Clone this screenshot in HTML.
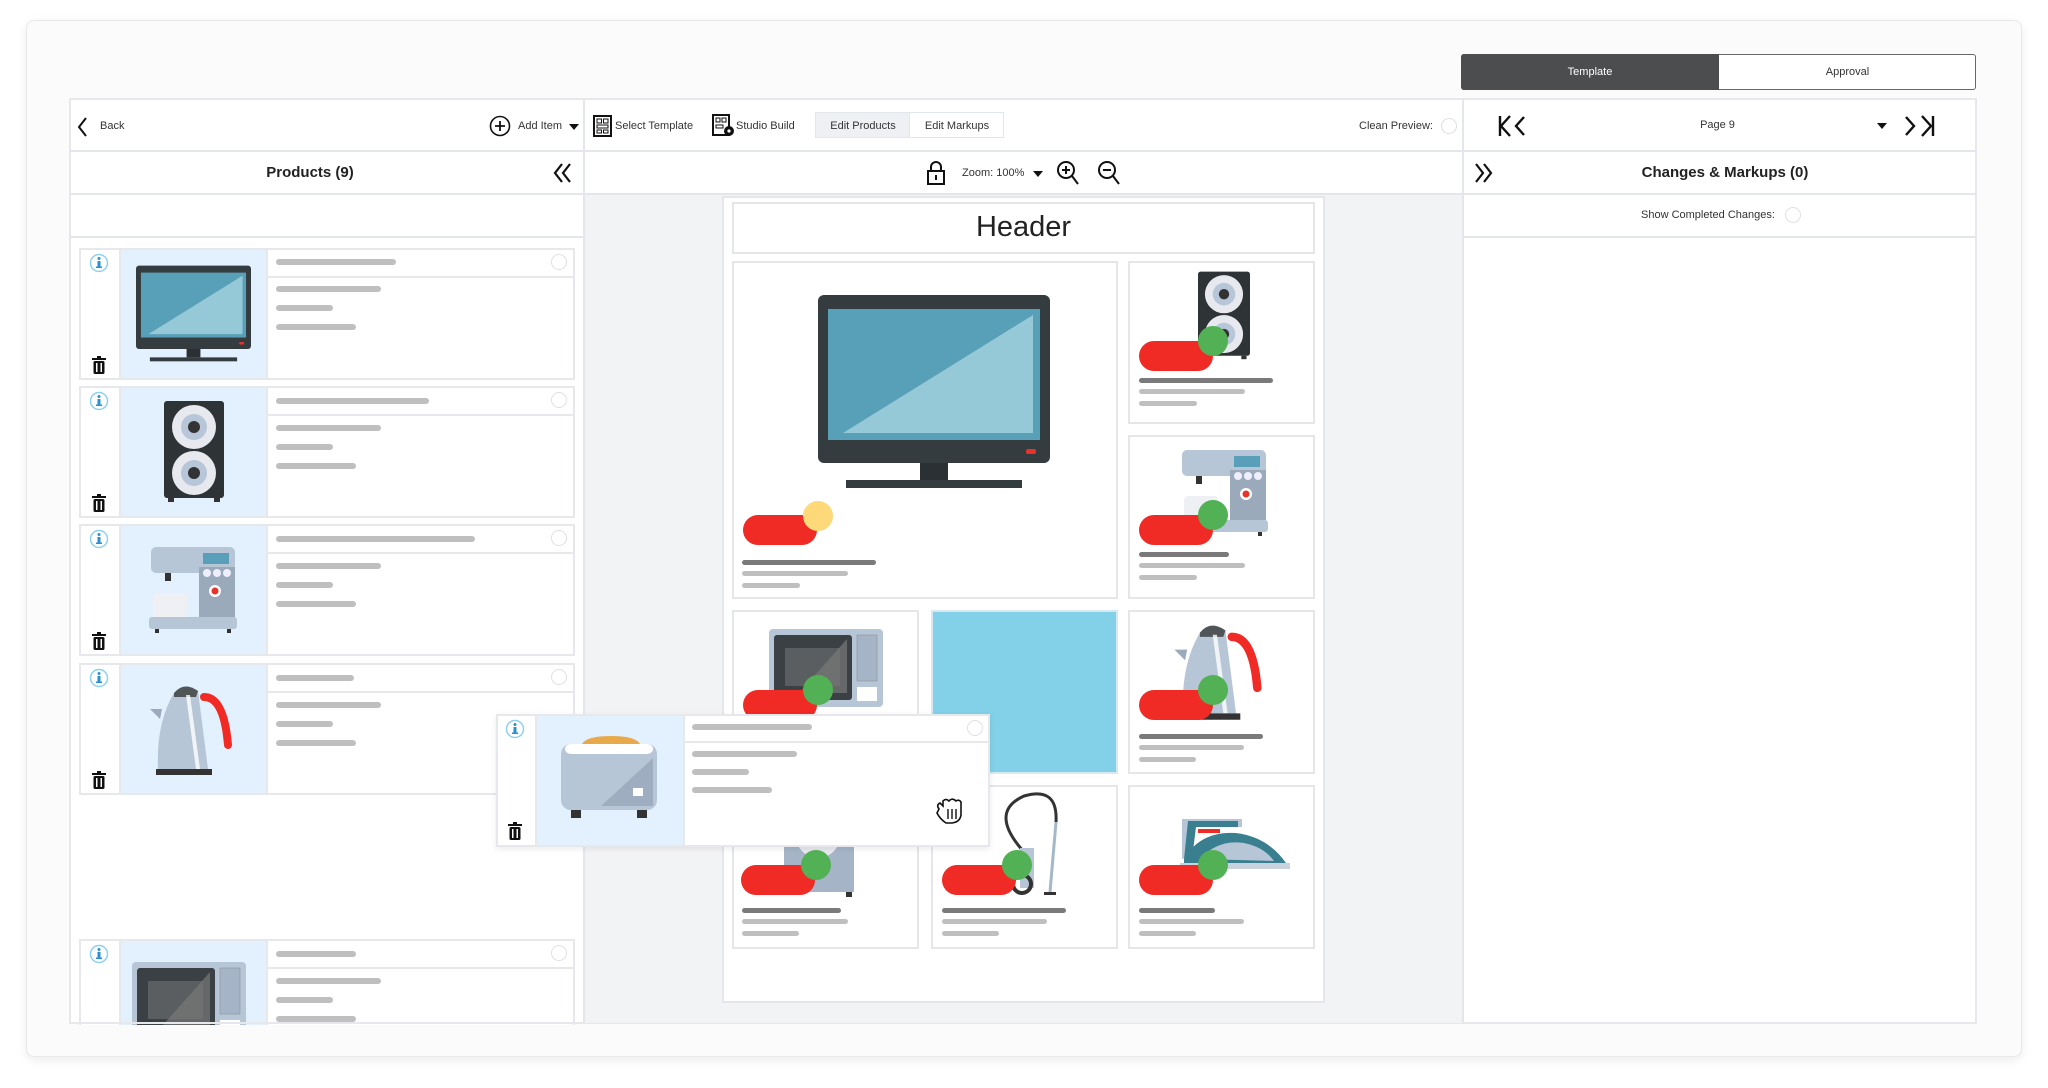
<!DOCTYPE html>
<html><head><meta charset="utf-8">
<style>
*{box-sizing:border-box;margin:0;padding:0}
body{width:2048px;height:1088px;background:#fff;position:relative;overflow:hidden;font-family:"Liberation Sans",sans-serif;color:#222}
.a{position:absolute}
.outer{left:26px;top:20px;width:1996px;height:1037px;background:#fbfbfc;border:1px solid #e8e8ea;border-radius:8px;box-shadow:0 3px 10px rgba(0,0,0,.08)}
.line{background:#e3e6ea}
.t{position:absolute;white-space:nowrap;font-size:12px;color:#333}
.card{position:absolute;left:79px;width:496px;height:132px;background:#fff;border:2px solid #e6e8ec}
.card .img{position:absolute;left:38px;top:0;width:149px;height:128px;background:#e3f0fd;border-left:2px solid #e6e8ec;border-right:2px solid #e6e8ec}
.card .hr{position:absolute;left:187px;right:0;top:26px;height:2px;background:#e6e8ec}
.bar{position:absolute;height:6px;border-radius:3px;background:#bfbfbf}
.bd{background:#7a7a7a}
.radio{position:absolute;width:16px;height:16px;border-radius:50%;border:1.5px solid #dde0e4;background:#fff}
.tile{position:absolute;background:#fff;border:2px solid #e4e6ea}
.pill{position:absolute;width:74px;height:30px;border-radius:15px;background:#f02a25}
.dot{position:absolute;width:30px;height:30px;border-radius:50%;background:#52b155}
svg{position:absolute;overflow:visible}
</style></head><body>
<svg width="0" height="0" style="position:absolute">
<defs>
<symbol id="tv" viewBox="0 0 232 193">
<rect x="0" y="0" width="232" height="168" rx="6" fill="#353c40"/>
<rect x="10" y="14" width="212" height="131" fill="#589fb8"/>
<polygon points="215,20 215,138 25,138" fill="#95c9d7"/>
<rect x="208" y="154" width="10" height="5" rx="2" fill="#e8332a"/>
<rect x="102" y="168" width="28" height="17" fill="#2a3033"/>
<rect x="28" y="185" width="176" height="8" fill="#353c40"/>
</symbol>
<symbol id="spk" viewBox="0 0 60 100">
<rect x="0" y="0" width="60" height="97" rx="3" fill="#2e3336"/>
<circle cx="30" cy="26" r="22" fill="#e7e9ee"/><circle cx="30" cy="26" r="13" fill="#b7c6d8"/><circle cx="30" cy="26" r="6" fill="#333"/>
<circle cx="30" cy="72" r="22" fill="#e7e9ee"/><circle cx="30" cy="72" r="13" fill="#b7c6d8"/><circle cx="30" cy="72" r="6" fill="#333"/>
<rect x="4" y="97" width="6" height="4" fill="#333"/><rect x="50" y="97" width="6" height="4" fill="#333"/>
</symbol>
<symbol id="cof" viewBox="0 0 90 88">
<rect x="2" y="0" width="84" height="26" rx="5" fill="#b7c6d7"/>
<rect x="54" y="6" width="26" height="11" fill="#5a9fb9"/>
<rect x="50" y="20" width="36" height="50" fill="#9aaabb"/>
<circle cx="58" cy="26" r="4" fill="#eef"/><circle cx="68" cy="26" r="4" fill="#eef"/><circle cx="78" cy="26" r="4" fill="#eef"/>
<circle cx="66" cy="44" r="6" fill="#fff"/><circle cx="66" cy="44" r="3.5" fill="#e8332a"/>
<rect x="16" y="26" width="6" height="8" fill="#333"/>
<rect x="4" y="46" width="34" height="26" rx="4" fill="#eef0f4"/>
<rect x="0" y="70" width="88" height="12" rx="3" fill="#b7c6d7"/>
<rect x="6" y="82" width="4" height="4" fill="#333"/><rect x="78" y="82" width="4" height="4" fill="#333"/>
</symbol>
<symbol id="ket" viewBox="0 0 90 96">
<path d="M28 10 Q38 -2 52 8 L62 86 L12 86 Q10 40 28 10Z" fill="#b7c6d7"/>
<path d="M28 10 Q38 -2 52 8 L50 14 L28 14Z" fill="#505558"/>
<path d="M44 12 L54 86 L50 86 L40 12Z" fill="#fff" opacity=".8"/>
<path d="M58 14 Q78 14 82 62" stroke="#f02a25" stroke-width="8" fill="none" stroke-linecap="round"/>
<path d="M4 26 L16 26 L14 36Z" fill="#9aaabb"/>
<rect x="10" y="86" width="56" height="6" fill="#333"/>
</symbol>
<symbol id="mw" viewBox="0 0 114 80">
<rect x="0" y="0" width="114" height="78" rx="4" fill="#b7c6d7"/>
<rect x="5" y="6" width="78" height="65" rx="3" fill="#3a4043"/>
<rect x="16" y="19" width="55" height="38" fill="#5a5e60"/>
<polygon points="78,10 78,64 30,64" fill="#777" opacity=".7"/>
<rect x="88" y="6" width="20" height="46" fill="#a5b5c7" stroke="#888" stroke-width=".5"/>
<rect x="88" y="58" width="20" height="14" fill="#fff"/>
</symbol>
<symbol id="toa" viewBox="0 0 96 92">
<path d="M20 18 Q20 6 50 6 Q80 6 80 18Z" fill="#e8a94a"/>
<rect x="0" y="14" width="96" height="66" rx="10" fill="#b7c6d7"/>
<rect x="4" y="14" width="88" height="10" rx="6" fill="#fff"/>
<polygon points="92,28 92,76 40,76" fill="#9eaec0"/>
<rect x="72" y="58" width="10" height="8" fill="#fff"/>
<rect x="10" y="80" width="10" height="8" fill="#333"/><rect x="76" y="80" width="10" height="8" fill="#333"/>
</symbol>
<symbol id="vac" viewBox="0 0 80 110">
<path d="M30 60 Q-6 20 30 4 Q64 -6 62 30" stroke="#333" stroke-width="3" fill="none"/>
<line x1="62" y1="30" x2="56" y2="100" stroke="#a4b8c8" stroke-width="3"/>
<rect x="26" y="56" width="14" height="40" fill="#b7c6d7"/>
<circle cx="28" cy="92" r="9" fill="none" stroke="#333" stroke-width="4"/>
<rect x="50" y="100" width="12" height="3" fill="#333"/>
</symbol>
<symbol id="wash" viewBox="0 0 80 80">
<rect x="0" y="0" width="70" height="72" fill="#a5b5c7"/>
<circle cx="34" cy="16" r="22" fill="#e7e9ee"/><circle cx="34" cy="12" r="14" fill="#333"/>
<rect x="62" y="72" width="6" height="5" fill="#333"/>
</symbol>
<symbol id="iron" viewBox="0 0 120 80">
<path d="M12 6 L72 6 L72 14 L24 14 L20 44 L12 46Z" fill="#b7c6d7"/>
<path d="M18 8 L68 8 L68 14 L26 14 L22 46 L14 46Z" fill="#3a7f90"/>
<path d="M14 46 Q30 18 66 20 Q98 24 116 50 L14 52Z" fill="#3a7f90"/>
<path d="M30 46 Q48 26 74 30 Q94 34 104 48Z" fill="#b7c6d7"/>
<rect x="28" y="16" width="22" height="4" fill="#f02a25"/>
<rect x="10" y="50" width="110" height="6" fill="#c9d3de"/>
</symbol>
<symbol id="info" viewBox="0 0 20 20"><circle cx="10" cy="10" r="8.5" fill="none" stroke="#8fd0ef" stroke-width="1.5"/><circle cx="10" cy="5.5" r="1.5" fill="#2a8fd0"/><rect x="8.5" y="8" width="3" height="6.5" fill="#2a8fd0"/><rect x="7" y="13.5" width="6" height="1.5" fill="#2a8fd0"/></symbol>
<symbol id="trash" viewBox="0 0 14 18"><rect x="0" y="2" width="14" height="2" fill="#111"/><rect x="5" y="0" width="4" height="2" fill="#111"/><rect x="1.5" y="5" width="11" height="13" rx="1.5" fill="#111"/><rect x="4" y="7" width="1.5" height="9" fill="#fff"/><rect x="8.5" y="7" width="1.5" height="9" fill="#fff"/></symbol>
</defs></svg>

<div class="a outer"></div>

<!-- tabs -->
<div class="a" style="left:1461px;top:54px;width:515px;height:36px;border:1px solid #666;border-radius:3px;background:#fff"></div>
<div class="a" style="left:1461px;top:54px;width:258px;height:36px;background:#4b4d4f;border-radius:3px 0 0 3px"></div>
<div class="t" style="left:1461px;top:66px;width:258px;text-align:center;color:#fff;font-size:11px">Template</div>
<div class="t" style="left:1719px;top:66px;width:257px;text-align:center;font-size:11px">Approval</div>

<!-- main panel -->
<div class="a" style="left:69px;top:98px;width:1908px;height:926px;background:#fff;border:2px solid #e6e8ec"></div>
<div class="a" style="left:584px;top:194px;width:879px;height:829px;background:#f2f3f5"></div>
<div class="a line" style="left:70px;top:150px;width:1906px;height:2px"></div>
<div class="a line" style="left:70px;top:193px;width:1906px;height:2px"></div>
<div class="a line" style="left:70px;top:236px;width:514px;height:2px"></div>
<div class="a line" style="left:1463px;top:236px;width:513px;height:2px"></div>
<div class="a line" style="left:583px;top:99px;width:2px;height:924px"></div>
<div class="a line" style="left:1462px;top:99px;width:2px;height:924px"></div>

<!-- toolbar row -->
<svg style="left:76px;top:116px" width="12" height="22"><path d="M10 2 L3 11 L10 20" stroke="#111" stroke-width="2" fill="none"/></svg>
<div class="t" style="left:100px;top:120px;font-size:11px">Back</div>
<svg style="left:489px;top:115px" width="22" height="22"><circle cx="11" cy="11" r="9.5" fill="none" stroke="#111" stroke-width="1.6"/><path d="M11 6V16M6 11H16" stroke="#111" stroke-width="1.8"/></svg>
<div class="t" style="left:518px;top:120px;font-size:11px">Add Item</div>
<svg style="left:569px;top:123px" width="10" height="8"><path d="M0 1H10L5 7Z" fill="#111"/></svg>
<svg style="left:593px;top:115px" width="20" height="22"><rect x="1" y="1" width="17" height="20" fill="none" stroke="#111" stroke-width="2"/><rect x="4" y="4" width="4.5" height="4" fill="none" stroke="#111"/><rect x="10.5" y="4" width="4.5" height="4" fill="none" stroke="#111"/><rect x="4" y="10" width="11" height="3" fill="none" stroke="#111"/><rect x="4" y="15" width="4.5" height="3" fill="none" stroke="#111"/><rect x="10.5" y="15" width="4.5" height="3" fill="none" stroke="#111"/></svg>
<div class="t" style="left:615px;top:120px;font-size:11px">Select Template</div>
<svg style="left:712px;top:114px" width="24" height="24"><rect x="1" y="1" width="16" height="20" fill="none" stroke="#111" stroke-width="2"/><rect x="4" y="4" width="4" height="4" fill="none" stroke="#111"/><rect x="10" y="4" width="4" height="4" fill="none" stroke="#111"/><rect x="4" y="11" width="7" height="3" fill="none" stroke="#111"/><circle cx="17" cy="17" r="5" fill="#111"/><circle cx="17" cy="17" r="1.6" fill="#fff"/></svg>
<div class="t" style="left:736px;top:120px;font-size:11px">Studio Build</div>
<div class="a" style="left:815px;top:112px;width:189px;height:26px;border:1.5px solid #e3e6ea;background:#fff"></div>
<div class="a" style="left:816px;top:113px;width:94px;height:24px;background:#eef0f3;border-right:1.5px solid #e3e6ea"></div>
<div class="t" style="left:816px;top:120px;width:94px;text-align:center;font-size:11px">Edit Products</div>
<div class="t" style="left:910px;top:120px;width:94px;text-align:center;font-size:11px">Edit Markups</div>
<div class="t" style="left:1359px;top:120px;font-size:11px">Clean Preview:</div>
<div class="radio" style="left:1441px;top:118px"></div>

<svg style="left:1498px;top:115px" width="44" height="22"><path d="M2 1V21M12 1L3 11L12 21M26 2L18 11L26 20" stroke="#111" stroke-width="2.4" fill="none"/></svg>
<div class="t" style="left:1690px;top:119px;width:55px;text-align:center;font-size:11px">Page 9</div>
<svg style="left:1877px;top:122px" width="10" height="8"><path d="M0 1H10L5 7Z" fill="#111"/></svg>
<svg style="left:1902px;top:115px" width="40" height="22"><path d="M4 2L12 11L4 20M20 1L29 11L20 21M31 1V21" stroke="#111" stroke-width="2.4" fill="none"/></svg>

<!-- row 2 -->
<div class="t" style="left:70px;top:164px;width:480px;text-align:center;font-size:15px;font-weight:bold;color:#222">Products (9)</div>
<svg style="left:552px;top:162px" width="22" height="22"><path d="M10 2L3 11L10 20M18 2L11 11L18 20" stroke="#111" stroke-width="2.2" fill="none"/></svg>
<svg style="left:926px;top:160px" width="20" height="26"><path d="M5 11V7A5 5 0 0 1 15 7V11" stroke="#111" stroke-width="2" fill="none"/><rect x="2" y="11" width="16" height="13" fill="none" stroke="#111" stroke-width="2"/><rect x="9" y="15" width="2" height="5" fill="#111"/></svg>
<div class="t" style="left:962px;top:167px;font-size:11px">Zoom: 100%</div>
<svg style="left:1033px;top:170px" width="10" height="8"><path d="M0 1H10L5 7Z" fill="#111"/></svg>
<svg style="left:1056px;top:160px" width="24" height="26"><circle cx="10" cy="10" r="8" fill="none" stroke="#111" stroke-width="2"/><path d="M6 10H14M10 6V14M16 16L22 24" stroke="#111" stroke-width="2"/></svg>
<svg style="left:1097px;top:160px" width="24" height="26"><circle cx="10" cy="10" r="8" fill="none" stroke="#111" stroke-width="2"/><path d="M6 10H14M16 16L22 24" stroke="#111" stroke-width="2"/></svg>
<svg style="left:1472px;top:162px" width="22" height="22"><path d="M4 2L11 11L4 20M12 2L19 11L12 20" stroke="#111" stroke-width="2.2" fill="none"/></svg>
<div class="t" style="left:1600px;top:164px;width:250px;text-align:center;font-size:15px;font-weight:bold;color:#222">Changes &amp; Markups (0)</div>
<div class="t" style="left:1641px;top:209px;font-size:11px">Show Completed Changes:</div>
<div class="radio" style="left:1785px;top:207px"></div>

<!-- left cards -->
<div class="card" style="top:248px"><div class="img"></div><div class="hr"></div></div>
<div class="card" style="top:386px"><div class="img"></div><div class="hr"></div></div>
<div class="card" style="top:524px"><div class="img"></div><div class="hr"></div></div>
<div class="card" style="top:663px"><div class="img"></div><div class="hr"></div></div>
<div class="card" style="top:939px;height:86px;border-bottom:none;overflow:hidden"><div class="img" style="height:84px"></div><div class="hr"></div>
<svg style="left:51px;top:21px" width="114" height="80"><use href="#mw"/></svg></div>

<svg style="left:89px;top:253px" width="20" height="20"><use href="#info"/></svg>
<svg style="left:89px;top:391px" width="20" height="20"><use href="#info"/></svg>
<svg style="left:89px;top:529px" width="20" height="20"><use href="#info"/></svg>
<svg style="left:89px;top:668px" width="20" height="20"><use href="#info"/></svg>
<svg style="left:89px;top:944px" width="20" height="20"><use href="#info"/></svg>
<svg style="left:92px;top:356px" width="14" height="18"><use href="#trash"/></svg>
<svg style="left:92px;top:494px" width="14" height="18"><use href="#trash"/></svg>
<svg style="left:92px;top:632px" width="14" height="18"><use href="#trash"/></svg>
<svg style="left:92px;top:771px" width="14" height="18"><use href="#trash"/></svg>

<svg style="left:136px;top:265px" width="115" height="97"><use href="#tv"/></svg>
<svg style="left:164px;top:399px" width="60" height="104"><use href="#spk"/></svg>
<svg style="left:149px;top:547px" width="90" height="88"><use href="#cof"/></svg>
<svg style="left:146px;top:683px" width="90" height="96"><use href="#ket"/></svg>

<!-- bars left -->
<div class="bar" style="left:276px;top:259px;width:120px"></div><div class="radio" style="left:551px;top:254px"></div>
<div class="bar" style="left:276px;top:286px;width:105px"></div><div class="bar" style="left:276px;top:305px;width:57px"></div><div class="bar" style="left:276px;top:324px;width:80px"></div>
<div class="bar" style="left:276px;top:398px;width:153px"></div><div class="radio" style="left:551px;top:392px"></div>
<div class="bar" style="left:276px;top:425px;width:105px"></div><div class="bar" style="left:276px;top:444px;width:57px"></div><div class="bar" style="left:276px;top:463px;width:80px"></div>
<div class="bar" style="left:276px;top:536px;width:199px"></div><div class="radio" style="left:551px;top:530px"></div>
<div class="bar" style="left:276px;top:563px;width:105px"></div><div class="bar" style="left:276px;top:582px;width:57px"></div><div class="bar" style="left:276px;top:601px;width:80px"></div>
<div class="bar" style="left:276px;top:675px;width:78px"></div><div class="radio" style="left:551px;top:669px"></div>
<div class="bar" style="left:276px;top:702px;width:105px"></div><div class="bar" style="left:276px;top:721px;width:57px"></div><div class="bar" style="left:276px;top:740px;width:80px"></div>
<div class="bar" style="left:276px;top:951px;width:80px"></div><div class="radio" style="left:551px;top:945px"></div>
<div class="bar" style="left:276px;top:978px;width:105px"></div><div class="bar" style="left:276px;top:997px;width:57px"></div><div class="bar" style="left:276px;top:1016px;width:80px;height:6px"></div>
<div class="a" style="left:70px;top:1022px;width:514px;height:2px;background:#e6e8ec"></div>

<!-- canvas page -->
<div class="a" style="left:722px;top:196px;width:603px;height:807px;background:#fff;border:2px solid #e4e6ea"></div>
<div class="tile" style="left:732px;top:202px;width:583px;height:52px"></div>
<div class="t" style="left:732px;top:211px;width:583px;text-align:center;font-size:29px;color:#222">Header</div>

<div class="tile" style="left:732px;top:261px;width:386px;height:338px"></div>
<svg style="left:818px;top:295px" width="232" height="193"><use href="#tv"/></svg>
<div class="pill" style="left:743px;top:515px"></div><div class="dot" style="left:803px;top:501px;background:#fdd97a"></div>
<div class="bar bd" style="left:742px;top:560px;width:134px;height:5px"></div><div class="bar" style="left:742px;top:571px;width:106px;height:5px"></div><div class="bar" style="left:742px;top:583px;width:58px;height:5px"></div>

<div class="tile" style="left:1128px;top:261px;width:187px;height:163px"></div>
<div class="tile" style="left:1128px;top:435px;width:187px;height:164px"></div>
<div class="tile" style="left:1128px;top:610px;width:187px;height:164px"></div>
<div class="tile" style="left:1128px;top:785px;width:187px;height:164px"></div>
<div class="tile" style="left:732px;top:610px;width:187px;height:164px"></div>
<div class="a" style="left:931px;top:610px;width:187px;height:164px;background:#82d1e8;border:2px solid #d8e8f0"></div>
<div class="tile" style="left:732px;top:785px;width:187px;height:164px"></div>
<div class="tile" style="left:931px;top:785px;width:187px;height:164px"></div>

<svg style="left:1198px;top:270px" width="52" height="90"><use href="#spk"/></svg>
<svg style="left:1180px;top:450px" width="90" height="88"><use href="#cof"/></svg>
<svg style="left:1170px;top:622px" width="96" height="102"><use href="#ket"/></svg>
<svg style="left:1170px;top:813px" width="120" height="80"><use href="#iron"/></svg>
<svg style="left:769px;top:629px" width="114" height="80"><use href="#mw"/></svg>
<svg style="left:784px;top:820px" width="80" height="80"><use href="#wash"/></svg>
<svg style="left:994px;top:792px" width="80" height="110"><use href="#vac"/></svg>

<div class="pill" style="left:1139px;top:341px"></div><div class="dot" style="left:1198px;top:326px"></div>
<div class="pill" style="left:1139px;top:515px"></div><div class="dot" style="left:1198px;top:500px"></div>
<div class="pill" style="left:1139px;top:690px"></div><div class="dot" style="left:1198px;top:675px"></div>
<div class="pill" style="left:1139px;top:865px"></div><div class="dot" style="left:1198px;top:850px"></div>
<div class="pill" style="left:743px;top:690px"></div><div class="dot" style="left:803px;top:675px"></div>
<div class="pill" style="left:741px;top:865px"></div><div class="dot" style="left:801px;top:850px"></div>
<div class="pill" style="left:942px;top:865px"></div><div class="dot" style="left:1002px;top:850px"></div>

<div class="bar bd" style="left:1139px;top:378px;width:134px;height:5px"></div><div class="bar" style="left:1139px;top:389px;width:106px;height:5px"></div><div class="bar" style="left:1139px;top:401px;width:58px;height:5px"></div>
<div class="bar bd" style="left:1139px;top:552px;width:90px;height:5px"></div><div class="bar" style="left:1139px;top:563px;width:106px;height:5px"></div><div class="bar" style="left:1139px;top:575px;width:58px;height:5px"></div>
<div class="bar bd" style="left:1139px;top:734px;width:124px;height:5px"></div><div class="bar" style="left:1139px;top:745px;width:105px;height:5px"></div><div class="bar" style="left:1139px;top:757px;width:57px;height:5px"></div>
<div class="bar bd" style="left:1139px;top:908px;width:76px;height:5px"></div><div class="bar" style="left:1139px;top:919px;width:105px;height:5px"></div><div class="bar" style="left:1139px;top:931px;width:57px;height:5px"></div>
<div class="bar bd" style="left:742px;top:908px;width:99px;height:5px"></div><div class="bar" style="left:742px;top:919px;width:106px;height:5px"></div><div class="bar" style="left:742px;top:931px;width:57px;height:5px"></div>
<div class="bar bd" style="left:942px;top:908px;width:124px;height:5px"></div><div class="bar" style="left:942px;top:919px;width:105px;height:5px"></div><div class="bar" style="left:942px;top:931px;width:57px;height:5px"></div>

<!-- dragged card -->
<div class="a" style="left:496px;top:714px;width:494px;height:133px;background:#fff;border:2px solid #e6e8ec;box-shadow:0 2px 6px rgba(0,0,0,.08)"></div>
<div class="a" style="left:535px;top:716px;width:150px;height:129px;background:#e3f0fd;border-left:2px solid #e6e8ec;border-right:2px solid #e6e8ec"></div>
<div class="a" style="left:685px;top:741px;width:303px;height:2px;background:#e6e8ec"></div>
<svg style="left:505px;top:719px" width="20" height="20"><use href="#info"/></svg>
<svg style="left:508px;top:822px" width="14" height="18"><use href="#trash"/></svg>
<svg style="left:561px;top:730px" width="96" height="92"><use href="#toa"/></svg>
<div class="bar" style="left:692px;top:724px;width:120px"></div><div class="radio" style="left:967px;top:720px"></div>
<div class="bar" style="left:692px;top:751px;width:105px"></div><div class="bar" style="left:692px;top:769px;width:57px"></div><div class="bar" style="left:692px;top:787px;width:80px"></div>
<svg style="left:934px;top:797px" width="32" height="28"><path d="M5 12 Q2 8 6 6 L9 9 L9 4 Q12 1 15 4 L16 3 Q19 1 22 4 Q25 2 27 5 L27 18 Q26 25 18 26 L12 26 Q6 22 3 16Z" fill="#fff" stroke="#111" stroke-width="1.6"/><path d="M14 12V22M18 12V22M22 12V22" stroke="#111" stroke-width="1.4"/></svg>
</body></html>
